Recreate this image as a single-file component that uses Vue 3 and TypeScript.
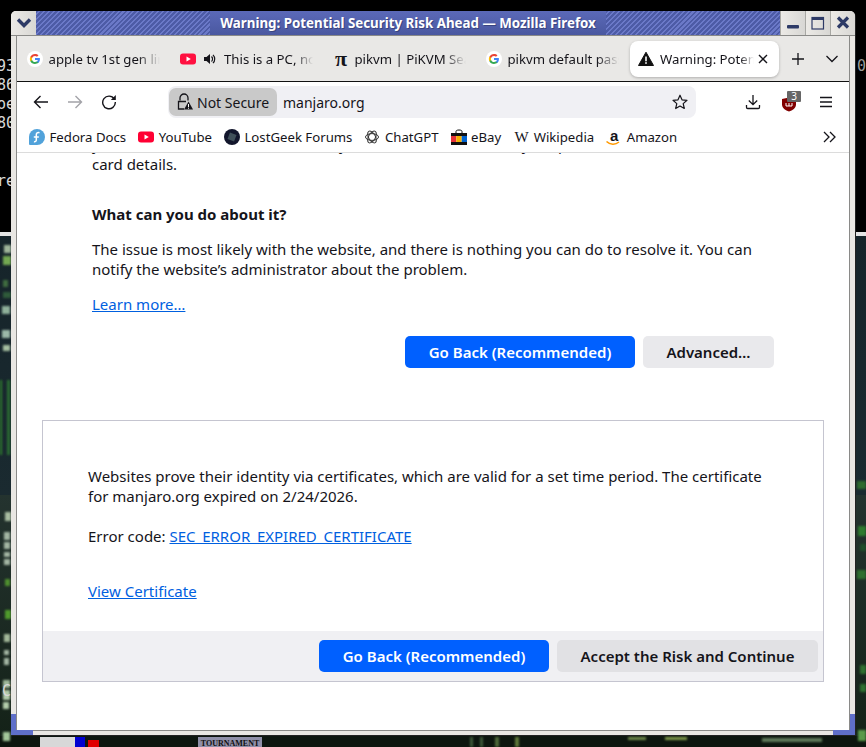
<script setup lang="ts">
interface Blob { x: number; y: number; w: number; h: number; c: string }
interface Tab { label: string; icon: string; audio?: boolean }

const tabs: Tab[] = [
  { label: 'apple tv 1st gen lin', icon: 'g' },
  { label: 'This is a PC, no', icon: 'yt', audio: true },
  { label: 'pikvm | PiKVM Sea', icon: 'pi' },
  { label: 'pikvm default pass', icon: 'g' },
]

const blobs: Blob[] = [
  { x: 4, y: 245, w: 7, h: 8, c: '#9fb59a' }, { x: 3, y: 256, w: 8, h: 9, c: '#74a852' },
  { x: 3, y: 280, w: 5, h: 7, c: '#3f6b3f' }, { x: 3, y: 292, w: 8, h: 6, c: '#2f5a3a' },
  { x: 2, y: 306, w: 8, h: 8, c: '#8fb09a' }, { x: 2, y: 330, w: 8, h: 8, c: '#9cb8a8' },
  { x: 3, y: 345, w: 7, h: 6, c: '#a6bfa0' }, { x: 0, y: 380, w: 2, h: 75, c: '#2e7a2e' },
  { x: 7, y: 380, w: 3, h: 75, c: '#2a6b32' }, { x: 5, y: 512, w: 6, h: 9, c: '#a8bca0' },
  { x: 4, y: 532, w: 6, h: 8, c: '#a3b5a3' }, { x: 4, y: 542, w: 6, h: 7, c: '#a3b5a3' },
  { x: 4, y: 552, w: 6, h: 5, c: '#a3b5a3' }, { x: 4, y: 559, w: 6, h: 6, c: '#a3b5a3' },
  { x: 5, y: 579, w: 5, h: 7, c: '#4f8f2f' }, { x: 5, y: 610, w: 6, h: 9, c: '#4f9a2c' },
  { x: 4, y: 634, w: 6, h: 8, c: '#a3b89a' }, { x: 4, y: 650, w: 5, h: 5, c: '#a3b5a3' },
  { x: 4, y: 658, w: 5, h: 7, c: '#a3b5a3' }, { x: 3, y: 680, w: 7, h: 8, c: '#9fb89a' },
  { x: 3, y: 690, w: 7, h: 10, c: '#b3ccaa' }, { x: 3, y: 702, w: 6, h: 7, c: '#b3ccaa' },
  { x: 3, y: 732, w: 7, h: 9, c: '#a3c89a' }, { x: 857, y: 481, w: 9, h: 8, c: '#2f6b2f' },
  { x: 858, y: 526, w: 8, h: 10, c: '#2f7a2f' }, { x: 860, y: 544, w: 6, h: 7, c: '#1f4f2a' },
  { x: 857, y: 570, w: 9, h: 9, c: '#2f6f30' }, { x: 860, y: 665, w: 6, h: 9, c: '#2f6f30' },
  { x: 860, y: 684, w: 6, h: 8, c: '#2f6f30' }, { x: 858, y: 730, w: 8, h: 11, c: '#5a9a4a' },
  { x: 470, y: 737, w: 3, h: 10, c: '#3f5a3a' }, { x: 480, y: 737, w: 3, h: 10, c: '#3f5a3a' },
  { x: 495, y: 737, w: 4, h: 10, c: '#4f6a3a' }, { x: 515, y: 737, w: 4, h: 10, c: '#5f7a3a' },
  { x: 628, y: 737, w: 18, h: 3, c: '#6f8a4a' }, { x: 665, y: 737, w: 22, h: 3, c: '#7f9a4a' },
  { x: 762, y: 738, w: 60, h: 4, c: '#5f7a5a' },
]

const sharp: Blob[] = [
  { x: 40, y: 737, w: 35, h: 10, c: '#d8d8d8' }, { x: 75, y: 737, w: 10, h: 10, c: '#0000d0' },
  { x: 88, y: 740, w: 11, h: 7, c: '#e00000' },
]

function blobStyle(b: Blob) {
  return { left: b.x + 'px', top: b.y + 'px', width: b.w + 'px', height: b.h + 'px', background: b.c }
}
</script>

<template>
  <div class="desktop">
    <i v-for="(b, i) in blobs" :key="i" class="blob" :style="blobStyle(b)"></i>
    <i v-for="(b, i) in sharp" :key="'s' + i" class="blob-sharp" :style="blobStyle(b)"></i>
    <div class="thumb">TOURNAMENT</div>
    <span class="term t1">93</span>
    <span class="term t2">86</span>
    <span class="term t3">oe</span>
    <span class="term t4">80</span>
    <span class="term t5">re</span>
    <span class="term t6">0b</span>
    <span class="term t7">Cl</span>

    <div class="window">
      <header class="titlebar">
        <button class="wm menu-btn" aria-label="Window menu">
          <svg width="16" height="12" viewBox="0 0 16 12"><path d="M2 2.500 8 8.500 14 2.500" fill="none" stroke="#2d3a66" stroke-width="3.400"/></svg>
        </button>
        <div class="title-fill">
          <div class="hatch"></div>
          <div class="title">Warning: Potential Security Risk Ahead — Mozilla Firefox</div>
          <div class="hatch"></div>
        </div>
        <button class="wm" aria-label="Minimize">
          <svg width="14" height="14" viewBox="0 0 14 14"><rect x="1" y="9" width="12" height="3.400" rx="1" fill="#2d3a66"/></svg>
        </button>
        <button class="wm" aria-label="Maximize">
          <svg width="14" height="14" viewBox="0 0 14 14"><rect x="1" y="1.500" width="11.500" height="11.500" fill="none" stroke="#2d3a66" stroke-width="1.200"/><rect x="1" y="1" width="11.500" height="3" fill="#2d3a66"/></svg>
        </button>
        <button class="wm wm-close" aria-label="Close">
          <svg width="14" height="14" viewBox="0 0 14 14"><path d="M2 1.500 12 11.500M12 1.500 2 11.500" stroke="#2d3a66" stroke-width="3.200"/></svg>
        </button>
      </header>

      <div class="client">
        <div class="tabstrip">
          <div v-for="t in tabs" :key="t.label" class="tab">
            <svg v-if="t.icon === 'g'" class="fav" width="16" height="16" viewBox="0 0 16 16">
              <circle cx="8" cy="8" r="8" fill="#fff"/>
              <path d="M12.900 8.100c0-.4 0-.7-.1-1H8v1.900h2.800c-.1.7-.5 1.200-1 1.600v1.300h1.600c1-.9 1.500-2.200 1.500-3.800z" fill="#4285f4"/>
              <path d="M8 13c1.400 0 2.500-.5 3.400-1.200l-1.600-1.300c-.5.3-1 .5-1.800.5-1.300 0-2.500-.9-2.900-2.100H3.400v1.300C4.200 11.900 6 13 8 13z" fill="#34a853"/>
              <path d="M5.100 8.900c-.2-.6-.2-1.200 0-1.800V5.800H3.400c-.7 1.400-.7 3 0 4.400z" fill="#fbbc05"/>
              <path d="M8 5c.8 0 1.500.3 2 .8l1.500-1.500C10.600 3.500 9.400 3 8 3 6 3 4.200 4.100 3.400 5.800l1.700 1.300C5.500 5.900 6.700 5 8 5z" fill="#ea4335"/>
            </svg>
            <svg v-else-if="t.icon === 'yt'" class="fav" width="16" height="16" viewBox="0 0 16 16">
              <rect y="2.500" width="16" height="11" rx="3" fill="#ff1040"/>
              <path d="M6.500 5.500 10.800 8l-4.300 2.500z" fill="#fff"/>
            </svg>
            <span v-else class="pi fav">π</span>
            <svg v-if="t.audio" class="audio" width="12" height="12" viewBox="0 0 12 12">
              <path d="M0 4h2.500L6 1v10L2.500 8H0z" fill="#15141a"/>
              <path d="M7.500 3.500a3.500 3.500 0 0 1 0 5M9 1.800a6 6 0 0 1 0 8.400" fill="none" stroke="#15141a" stroke-width="1.200"/>
            </svg>
            <span class="tab-label">{{ t.label }}</span>
          </div>
          <div class="tab tab-active">
            <svg class="fav" width="16" height="16" viewBox="0 0 16 16">
              <path d="M8 1.200 15.500 14.500H.5z" fill="#111" stroke="#111" stroke-linejoin="round"/>
              <rect x="7.200" y="5.500" width="1.600" height="4.800" fill="#fff"/><rect x="7.200" y="11.200" width="1.600" height="1.600" fill="#fff"/>
            </svg>
            <span class="tab-label">Warning: Poten</span>
            <svg class="tab-x" width="10" height="10" viewBox="0 0 10 10"><path d="M1 1 9 9M9 1 1 9" stroke="#15141a" stroke-width="1.400"/></svg>
          </div>
          <button class="strip-btn plus" aria-label="New tab">
            <svg width="14" height="14" viewBox="0 0 14 14"><path d="M7 1v12M1 7h12" stroke="#15141a" stroke-width="1.300"/></svg>
          </button>
          <button class="strip-btn list" aria-label="List tabs">
            <svg width="14" height="10" viewBox="0 0 14 10"><path d="M1.500 2 7 7.500 12.500 2" fill="none" stroke="#15141a" stroke-width="1.300"/></svg>
          </button>
        </div>

        <nav class="navbar">
          <button class="nav-btn" aria-label="Back">
            <svg width="16" height="16" viewBox="0 0 16 16"><path d="M15 8H1.500M7.500 2 1.500 8l6 6" fill="none" stroke="#15141a" stroke-width="1.400"/></svg>
          </button>
          <button class="nav-btn" aria-label="Forward">
            <svg width="16" height="16" viewBox="0 0 16 16"><path d="M1 8h13.500M8.500 2l6 6-6 6" fill="none" stroke="#a3a3a8" stroke-width="1.400"/></svg>
          </button>
          <button class="nav-btn" aria-label="Reload">
            <svg width="16" height="16" viewBox="0 0 16 16"><path d="M13.300 5A6.300 6.300 0 1 0 14.300 8" fill="none" stroke="#15141a" stroke-width="1.400"/><path d="M14.800 1v5h-5z" fill="#15141a"/></svg>
          </button>
          <div class="urlbar">
            <div class="identity">
              <svg width="16" height="18" viewBox="0 0 16 18">
                <path d="M3 7.500V5a4 4 0 0 1 8 0v2.500" fill="none" stroke="#15141a" stroke-width="1.300"/>
                <path d="M7 16H1.500V8.500H9" fill="none" stroke="#15141a" stroke-width="1.300"/>
                <path d="M11.500 8.500 16 16.500H7z" fill="#15141a"/>
                <rect x="11" y="11" width="1" height="3" fill="#fff"/><rect x="11" y="14.700" width="1" height="1" fill="#fff"/>
              </svg>
              <span>Not Secure</span>
            </div>
            <span class="url">manjaro.org</span>
            <svg class="star" width="16" height="16" viewBox="0 0 16 16"><path d="M8 1.200 10 5.800l5 .5-3.800 3.300 1.100 4.900L8 12l-4.300 2.500 1.100-4.900L1 6.300l5-.5z" fill="none" stroke="#15141a" stroke-width="1.200" stroke-linejoin="round"/></svg>
          </div>
          <div class="nav-right">
            <svg width="16" height="16" viewBox="0 0 16 16"><path d="M8 1v9.500M3.800 6.500 8 10.700l4.200-4.200M1.500 11v2.300c0 .7.500 1.200 1.200 1.200h10.600c.7 0 1.200-.5 1.200-1.200V11" fill="none" stroke="#15141a" stroke-width="1.300"/></svg>
            <div class="ublock">
              <svg width="14" height="15" viewBox="0 0 14 15"><path d="M0 2 7 .5 14 2v5.500c0 3.500-3.500 6-7 7-3.500-1-7-3.500-7-7z" fill="#800000"/><path d="M4 6v3h6V6M7 6v3" fill="none" stroke="#fff" stroke-width="1"/></svg>
              <span class="badge">3</span>
            </div>
            <svg width="14" height="12" viewBox="0 0 14 12"><path d="M1 1.500h12M1 6h12M1 10.500h12" stroke="#15141a" stroke-width="1.300"/></svg>
          </div>
        </nav>

        <div class="bookmarks">
          <a class="bm">
            <svg width="16" height="16" viewBox="0 0 16 16"><path d="M8 0a8 8 0 0 1 0 16H1a1 1 0 0 1-1-1V8a8 8 0 0 1 8-8z" fill="#51a2da"/><path d="M10.500 3.800c-2-.7-3.200.4-3.200 2V11c0 1.300-1.200 2-2.300 1.500M4.800 8h5" fill="none" stroke="#fff" stroke-width="1.500"/></svg>
            <span>Fedora Docs</span>
          </a>
          <a class="bm">
            <svg width="16" height="16" viewBox="0 0 16 16"><rect y="2.500" width="16" height="11" rx="3" fill="#ff0033"/><path d="M6.500 5.500 10.800 8l-4.300 2.500z" fill="#fff"/></svg>
            <span>YouTube</span>
          </a>
          <a class="bm">
            <svg width="16" height="16" viewBox="0 0 16 16"><circle cx="8" cy="8" r="8" fill="#12162c"/><rect x="4.500" y="4.500" width="7" height="7" fill="#40505a" transform="rotate(20 8 8)"/></svg>
            <span>LostGeek Forums</span>
          </a>
          <a class="bm">
            <svg width="16" height="16" viewBox="0 0 16 16"><g fill="none" stroke="#333" stroke-width="1"><ellipse cx="8" cy="8" rx="6.500" ry="3.400"/><ellipse cx="8" cy="8" rx="6.500" ry="3.400" transform="rotate(60 8 8)"/><ellipse cx="8" cy="8" rx="6.500" ry="3.400" transform="rotate(120 8 8)"/></g></svg>
            <span>ChatGPT</span>
          </a>
          <a class="bm">
            <svg width="16" height="16" viewBox="0 0 16 16"><path d="M5 4V2.500C5 1.500 6 1 8 1s3 .5 3 1.500V4" fill="none" stroke="#111" stroke-width="1"/><rect y="4" width="16" height="3" fill="#111"/><rect y="13" width="16" height="3" fill="#111"/><rect y="7" width="5.300" height="6" fill="#e53238"/><rect x="5.300" y="7" width="5.400" height="6" fill="#f5af02"/><rect x="10.700" y="7" width="5.300" height="6" fill="#0064d2"/></svg>
            <span>eBay</span>
          </a>
          <a class="bm bm-wiki">
            <span class="wiki">W</span>
            <span>Wikipedia</span>
          </a>
          <a class="bm">
            <span class="amz">
              <b>a</b>
              <svg width="14" height="5" viewBox="0 0 14 5"><path d="M.5 .5c3.500 3.500 9 3.500 12.500 .5" fill="none" stroke="#f90" stroke-width="1.500"/></svg>
            </span>
            <span>Amazon</span>
          </a>
          <svg class="more" width="14" height="12" viewBox="0 0 14 12"><path d="M1 1l5 5-5 5M7 1l5 5-5 5" fill="none" stroke="#15141a" stroke-width="1.300"/></svg>
        </div>

        <main class="page">
          <div class="doc">
            <p class="lead">you visit this site, attackers could try to steal information like your passwords, emails, or credit card details.</p>
            <h2 class="sub">What can you do about it?</h2>
            <p class="para">The issue is most likely with the website, and there is nothing you can do to resolve it. You can notify the website’s administrator about the problem.</p>
            <a class="link learn">Learn more…</a>
            <div class="actions">
              <button class="btn primary">Go Back (Recommended)</button>
              <button class="btn secondary adv">Advanced…</button>
            </div>
          </div>
          <section class="advanced">
            <div class="adv-body">
              <p class="cert">Websites prove their identity via certificates, which are valid for a set time period. The certificate for manjaro.org expired on 2/24/2026.</p>
              <p class="code">Error code: <a class="link">SEC_ERROR_EXPIRED_CERTIFICATE</a></p>
              <a class="link view">View Certificate</a>
            </div>
            <div class="adv-foot">
              <button class="btn primary">Go Back (Recommended)</button>
              <button class="btn secondary accept">Accept the Risk and Continue</button>
            </div>
          </section>
        </main>
      </div>
      <i class="corner corner-l"></i>
      <i class="corner corner-r"></i>
    </div>
  </div>
</template>

<style>
html, body { margin: 0; background: #000; }
</style>

<style scoped>
* { box-sizing: border-box; }
.desktop {
  position: relative; width: 866px; height: 747px; overflow: hidden;
  background: linear-gradient(#000 0, #000 232px, #e4e4e4 232px, #e4e4e4 236px, #16242a 236px, #1a2a30 495px, #24332f 495px, #142218 736px, #0d160f 736px);
  font-family: "Noto Sans", sans-serif; color: #15141a;
}
.blob { position: absolute; filter: blur(1.200px); }
.blob-sharp { position: absolute; }
.thumb {
  position: absolute; left: 198px; top: 737px; width: 64px; height: 10px; background: #8f8fa8; color: #111;
  font: 700 8px/14px "Liberation Serif", serif; text-align: center; overflow: hidden;
}
.term { position: absolute; color: #d8d8d8; font: 15px/16px "DejaVu Sans Mono", monospace; left: -3px; }
.t1 { top: 58px; }
.t2 { top: 77px; }
.t3 { top: 96px; }
.t4 { top: 115px; }
.t5 { top: 173px; }
.t6 { top: 58px; left: 857px; color: #9a9a9a; }
.t7 { top: 683px; left: 2px; }
.window {
  position: absolute; left: 11px; top: 11px; width: 844px; height: 724px;
  background: #e9e7e3; border-radius: 5px 5px 0 0; box-shadow: 1px 1px 0 #222;
  display: flex; flex-direction: column;
}
.titlebar { height: 25px; display: flex; flex: none; border-bottom: 1px solid #8a8a88; }
.wm {
  width: 25px; height: 24px; padding: 0; border: 0; border-left: 1px solid #a8a8a4;
  background: linear-gradient(90deg, #eceae6, #d8d7d4); display: flex; align-items: center; justify-content: center;
}
.menu-btn { border-left: 0; border-radius: 5px 0 0 0; }
.wm-close { border-radius: 0 5px 0 0; }
.title-fill { flex: 1; display: flex; background: linear-gradient(#5b69b8, #4a58a0); }
.hatch {
  flex: 1;
  background: repeating-linear-gradient(135deg, #4d5ba6 0 2px, #6b79c8 2px 3.500px);
}
.title {
  padding: 0 10px; color: #fff; font-weight: 700; font-size: 13.330px; line-height: 24px; white-space: nowrap;
  text-shadow: 1px 1px 0 #39447f;
}
.client {
  flex: 1; margin: 0 5px 4px 5px; border: 1px solid #8a8a88; border-top: 0; background: #fff;
  display: flex; flex-direction: column; min-height: 0;
}
.tabstrip {
  height: 46px; flex: none; background: #e9e8e6; border-bottom: 1px solid #111; display: flex; align-items: center; padding-left: 10px;
  font-size: 13.200px;
}
.tab { width: 153px; height: 36px; display: flex; align-items: center; flex: none; }
.tab > .fav { flex: none; margin-right: 5.500px; }
.tab-label {
  flex: 1; min-width: 0; white-space: nowrap; overflow: hidden; margin-right: 20px;
  -webkit-mask-image: linear-gradient(90deg, #000 80%, transparent); mask-image: linear-gradient(90deg, #000 80%, transparent);
}
.audio { flex: none; margin: 0 8px 0 2.500px; }
.pi { width: 16px; font: 700 22px/16px "Liberation Serif", serif; text-align: center; }
.tab-active {
  width: 149px; margin-left: -9px; margin-top: 1px; padding-left: 8px; background: #fff; border-radius: 8px; box-shadow: 0 1px 3px rgba(0,0,0,.25); position: relative;
}
.tab-active > .fav { margin-right: 6px; }
.tab-active .tab-label { margin-right: 4px; -webkit-mask-image: linear-gradient(90deg, #000 85%, transparent); mask-image: linear-gradient(90deg, #000 85%, transparent); }
.tab-x { flex: none; margin-right: 11px; }
.strip-btn { border: 0; background: none; padding: 0; display: flex; align-items: center; justify-content: center; }
.plus { margin-left: 12px; width: 14px; height: 14px; }
.list { margin-left: 20px; width: 14px; height: 10px; }
.navbar { height: 40px; flex: none; display: flex; align-items: center; padding-left: 16px; }
.nav-btn { width: 16px; height: 16px; padding: 0; border: 0; background: none; margin-right: 18px; display: flex; }
.urlbar {
  margin-left: 33px; width: 528px; height: 32px; background: #f0f0f4; border-radius: 8px; display: flex; align-items: center; padding-left: 1px; font-size: 14px;
}
.identity {
  width: 108px; height: 28px; background: #c9c9c9; border-radius: 7px; display: flex; align-items: center; gap: 4px; padding-left: 8px;
}
.url { margin-left: 6px; flex: 1; }
.star { margin-right: 8px; }
.nav-right { display: flex; align-items: center; margin-left: 49px; }
.ublock { position: relative; width: 14px; height: 15px; margin: 0 23px 0 21px; top: 2px; }
.ublock svg { display: block; }
.badge {
  position: absolute; left: 5px; top: -6px; width: 14px; height: 11px; background: #666; color: #fff; font-size: 10px; line-height: 11px; text-align: center; border-radius: 1px;
}
.bookmarks {
  height: 31px; flex: none; display: flex; align-items: center; gap: 12px; padding-left: 12px; border-bottom: 1px solid #dcdcdc; font-size: 13.200px;
}
.bm { display: flex; align-items: center; gap: 4.500px; white-space: nowrap; }
.bm-wiki { margin-left: 1px; }
.wiki { width: 15px; font: 15px/16px "Liberation Serif", serif; text-align: center; }
.amz { position: relative; width: 16px; height: 16px; display: block; text-align: center; font: 700 15px/13px "Liberation Sans", sans-serif; }
.amz svg { position: absolute; left: 0; bottom: -1px; }
.amz b { display: block; }
.more { margin-left: auto; margin-right: 12px; }
.page { flex: 1; min-height: 0; overflow: hidden; background: #fff; font-size: 15px; line-height: 20.500px; display: flex; flex-direction: column; }
.doc { padding-left: 75px; padding-right: 75px; margin-top: -19px; flex: none; }
.lead { margin: 0; line-height: 20px; }
.sub { margin: 30px 0 0; font-size: 15px; font-weight: 700; line-height: 21px; }
.para { margin: 13.500px 0 0; }
.link { color: #0060df; text-decoration: underline; }
.learn { display: block; margin-top: 14.500px; }
.actions { display: flex; justify-content: flex-end; gap: 8px; margin-top: 21px; }
.btn {
  height: 32px; border: 0; border-radius: 5px; font: 600 15px/32px "Noto Sans", sans-serif; padding: 0; white-space: nowrap;
}
.primary { background: #0060ff; color: #fff; width: 230px; }
.secondary { background: #e9e9ec; color: #15141a; }
.adv { width: 131px; }
.accept { width: 261px; background: #e1e1e4; }
.advanced { margin: 52px 25px 0; height: 262px; border: 1px solid #c5c5d0; display: flex; flex-direction: column; flex: none; }
.adv-body { flex: 1; padding: 45px 45px 0; }
.cert { margin: 0; line-height: 20px; }
.code { margin: 20px 0 0; }
.view { display: block; margin-top: 34.500px; }
.adv-foot { height: 50px; background: #f0f0f3; display: flex; justify-content: flex-end; gap: 8px; padding: 9px 5px 0 0; }
.corner { position: absolute; background: #5f6fc9; }
.corner-l { left: 0; bottom: 0; width: 22px; height: 21px; clip-path: polygon(0 0, 5px 0, 5px calc(100% - 5px), 100% calc(100% - 5px), 100% 100%, 0 100%); }
.corner-r { right: 0; bottom: 0; width: 22px; height: 21px; clip-path: polygon(calc(100% - 5px) 0, 100% 0, 100% 100%, 0 100%, 0 calc(100% - 5px), calc(100% - 5px) calc(100% - 5px)); }
</style>
